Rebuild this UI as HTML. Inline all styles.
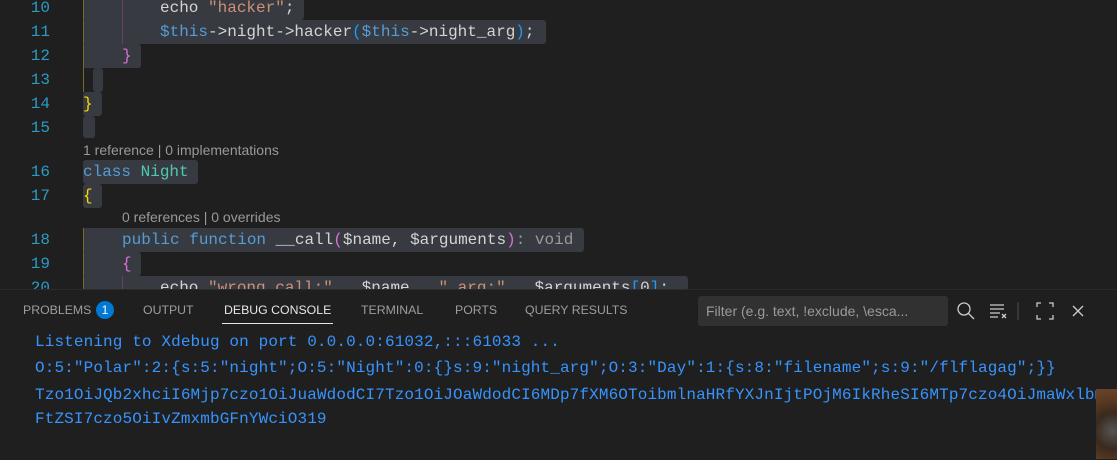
<!DOCTYPE html>
<html><head><style>
body{margin:0;width:1117px;height:459px;background:#1f1f1f;overflow:hidden;position:relative;font-family:"Liberation Mono",monospace}
.ln{position:absolute;left:0;width:50px;text-align:right;color:#2b9bc4;font-size:16px;line-height:24px}
.c{position:absolute;font-size:16px;line-height:24px;color:#d4d4d4;white-space:pre}
.hl{position:absolute;background:#373a40;border-radius:3px}
.lens{position:absolute;font-family:"Liberation Sans",sans-serif;font-size:14px;color:#999;line-height:18px}
.s{color:#ce9178}.v{color:#569cd6}.k{color:#569cd6}.t{color:#4ec9b0}.y{color:#ffd700}.p{color:#da70d6}.b{color:#179fff}.g{color:#9a9a9a}
.tab{position:absolute;top:303px;font-family:"Liberation Sans",sans-serif;font-size:12.3px;color:#9d9d9d}
.con{position:absolute;left:35px;font-size:16px;letter-spacing:0.12px;line-height:24px;color:#3794ff;white-space:pre}
</style></head><body>
<div class="hl" style="left:83px;top:-4px;width:221px;height:24px"></div>
<div class="hl" style="left:83px;top:20px;width:463px;height:24px"></div>
<div class="hl" style="left:83px;top:44px;width:58px;height:24px"></div>
<div class="hl" style="left:93px;top:68px;width:10px;height:24px"></div>
<div class="hl" style="left:83px;top:92px;width:19px;height:24px"></div>
<div class="hl" style="left:83px;top:116px;width:12px;height:22px"></div>
<div class="hl" style="left:83px;top:160px;width:115px;height:24px"></div>
<div class="hl" style="left:83px;top:184px;width:19px;height:24px"></div>
<div class="hl" style="left:83px;top:228px;width:501px;height:24px"></div>
<div class="hl" style="left:83px;top:252px;width:58px;height:24px"></div>
<div class="hl" style="left:83px;top:276px;width:605px;height:14px"></div>
<div style="position:absolute;left:83px;top:0;width:1px;height:92px;background:#7a6a2a"></div>
<div style="position:absolute;left:122px;top:0;width:1px;height:44px;background:#6a3f6a"></div>
<div style="position:absolute;left:83px;top:228px;width:1px;height:62px;background:#7a6a2a"></div>
<div style="position:absolute;left:122px;top:276px;width:1px;height:14px;background:#6a3f6a"></div>

<div class="ln" style="top:-4px">10</div><div class="c" style="left:160px;top:-4px">echo <span class="s">"hacker"</span>;</div>
<div class="ln" style="top:20px">11</div><div class="c" style="left:160px;top:20px"><span class="v">$this</span>-&gt;night-&gt;hacker<span class="b">(</span><span class="v">$this</span>-&gt;night_arg<span class="b">)</span>;</div>
<div class="ln" style="top:44px">12</div><div class="c" style="left:122px;top:44px"><span class="p">}</span></div>
<div class="ln" style="top:68px">13</div>
<div class="ln" style="top:92px">14</div><div class="c" style="left:83px;top:92px"><span class="y">}</span></div>
<div class="ln" style="top:116px">15</div>
<div class="lens" style="left:83px;top:141px">1 reference | 0 implementations</div>
<div class="ln" style="top:160px">16</div><div class="c" style="left:83px;top:160px"><span class="k">class</span> <span class="t">Night</span></div>
<div class="ln" style="top:184px">17</div><div class="c" style="left:83px;top:184px"><span class="y">{</span></div>
<div class="lens" style="left:122px;top:208px">0 references | 0 overrides</div>
<div class="ln" style="top:228px">18</div><div class="c" style="left:122px;top:228px"><span class="k">public</span> <span class="k">function</span> __call<span class="p">(</span>$name, $arguments<span class="p">)</span><span class="g">: void</span></div>
<div class="ln" style="top:252px">19</div><div class="c" style="left:122px;top:252px"><span class="p">{</span></div>
<div style="position:absolute;left:0;top:276px;width:1117px;height:14px;overflow:hidden">
<div class="ln" style="top:0">20</div><div class="c" style="left:160px;top:0">echo <span class="s">"wrong call:"</span> . $name . <span class="s">" arg:"</span> . $arguments<span class="b">[</span>0<span class="b">]</span>;</div></div>

<div style="position:absolute;left:0;top:289px;width:1117px;height:170px;background:#1f1f1f;border-top:1px solid #2b2b2b"></div>
<div class="tab" style="left:23px">PROBLEMS</div>
<div style="position:absolute;left:96px;top:301px;width:18px;height:18px;border-radius:9px;background:#0078d4;color:#fff;font:12px 'Liberation Sans',sans-serif;text-align:center;line-height:18px">1</div>
<div class="tab" style="left:143px">OUTPUT</div>
<div class="tab" style="left:224px;color:#e7e7e7">DEBUG CONSOLE</div>
<div style="position:absolute;left:222px;top:323px;width:111px;height:1px;background:#e7e7e7"></div>
<div class="tab" style="left:361px">TERMINAL</div>
<div class="tab" style="left:455px">PORTS</div>
<div class="tab" style="left:525px">QUERY RESULTS</div>
<div style="position:absolute;left:698px;top:296px;width:250px;height:30px;background:#313131;border-radius:3px;font:14px 'Liberation Sans',sans-serif;color:#9a9a9a;line-height:30px;padding-left:8px;box-sizing:border-box">Filter (e.g. text, !exclude, \esca...</div>
<svg style="position:absolute;left:955px;top:300px" width="130" height="22" fill="none" stroke="#ccc" stroke-width="1.3">
<circle cx="9" cy="9" r="6"/><path d="M13 13l6 6"/>
<path d="M35 5h14M35 9h14M35 13h10M35 17h8M47 14l4 4M51 14l-4 4"/>
<path d="M63 2v18" stroke="#444"/>
<path d="M86 3h-4v4M94 3h4v4M86 19h-4v-4M94 19h4v-4"/>
<path d="M120 5l10 10M130 5l-10 10" transform="translate(-2,1)"/>
</svg>
<div class="con" style="top:330px">Listening to Xdebug on port 0.0.0.0:61032,:::61033 ...</div>
<div class="con" style="top:356px">O:5:"Polar":2:{s:5:"night";O:5:"Night":0:{}s:9:"night_arg";O:3:"Day":1:{s:8:"filename";s:9:"/flflagag";}}</div>
<div class="con" style="top:383px">Tzo1OiJQb2xhciI6Mjp7czo1OiJuaWdodCI7Tzo1OiJOaWdodCI6MDp7fXM6OToibmlnaHRfYXJnIjtPOjM6IkRheSI6MTp7czo4OiJmaWxlbm</div>
<div class="con" style="top:407px">FtZSI7czo5OiIvZmxmbGFnYWciO319</div>
<div style="position:absolute;left:1096px;top:389px;width:21px;height:70px;background:radial-gradient(circle at 80% 60%,#555 0,#3a2a1e 40%,#5a3a22 70%,#6b4628 100%)"></div>
</body></html>
